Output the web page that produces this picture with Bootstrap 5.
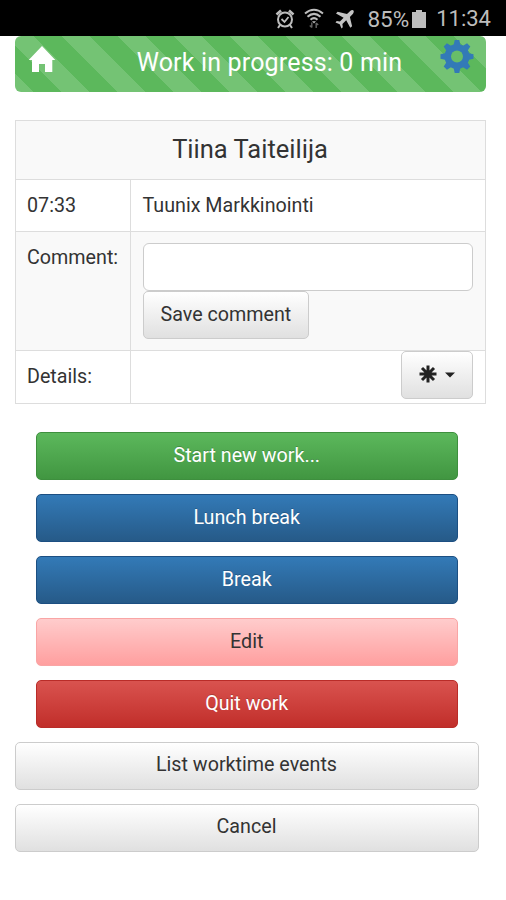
<!DOCTYPE html>
<html lang="en">
<head>
<meta charset="utf-8">
<meta name="viewport" content="width=device-width, initial-scale=1">
<title>Work in progress</title>
<link href="https://cdn.jsdelivr.net/npm/bootstrap@5.3.0/dist/css/bootstrap.min.css" rel="stylesheet">
<style>
body{font-family:Roboto,"Liberation Sans",sans-serif;font-size:19.700px;line-height:28px;color:#333;background:#fff;min-height:900px;overflow:hidden}
.statusbar{height:36px;background:#000;color:#bdbdbd;font-size:22px;line-height:36px;padding:2px 15px 0 0}
.statusbar svg{display:block;flex:none}
.plane{margin-left:10px}
.pct{font-size:22.500px;margin-left:12px}
.battery{margin:0 10px 0 3px}
.banner{height:56px;margin:0 20px 0 15px;border-radius:6px;background-color:#5cb85c;background-image:linear-gradient(45deg,rgba(255,255,255,.15) 25%,transparent 25%,transparent 50%,rgba(255,255,255,.15) 50%,rgba(255,255,255,.15) 75%,transparent 75%);background-size:56px 56px;background-position:-9px 0;color:#fff;padding:0 12px 0 13px}
.banner-title{font-size:25px;line-height:53px;letter-spacing:.17px;padding-left:43px}
.worktable{width:471px;margin:28px 0 0 14.5px;color:#333;table-layout:fixed;border-collapse:collapse}
.worktable td,.worktable th{border:1.5px solid #ddd;padding:11px 12px 0;vertical-align:top;background:#fff}
.worktable td{line-height:30px}
.worktable td:first-child{padding-left:11.500px;padding-right:8px}
.worktable .shade>*{background:#f9f9f9}
.worktable th{font-size:25.500px;font-weight:400;line-height:34px;text-align:center}
.field{height:48px;border:1.5px solid #ccc;border-radius:6px}
.act{height:48px;border-radius:5px;font-size:19.700px;line-height:28px;padding:8.500px 17px 9px;border-width:1.5px}
.more .act{padding-top:7.500px;padding-bottom:10px}
.act-plain{color:#333;background:linear-gradient(#fff,#e0e0e0);border-color:#ccc}
.act-green{color:#fff;background:linear-gradient(#5cb85c,#419641);border-color:#3e8f3e}
.act-blue{color:#fff;background:linear-gradient(#337ab7,#265a88);border-color:#1c4f82}
.act-pink{color:#333;background:linear-gradient(#ffcccc,#ff9f9f);border-color:#f9a5a5}
.act-red{color:#fff;background:linear-gradient(#d9534f,#c12e2a);border-color:#b92c28}
.actions{gap:14px;margin:28px 48px 14px 35.5px}
.more{gap:14px;margin:0 27.5px 0 14.5px}
.act-green,.act-blue,.act-red{text-shadow:0 -1px 0 rgba(0,0,0,.2)}
</style>
</head>
<body>
<header class="statusbar d-flex align-items-center justify-content-end">
  <svg width="20" height="22" viewBox="0 0 20 22" fill="none" stroke="#bdbdbd" stroke-width="2"><circle cx="10" cy="11.500" r="7"/><path d="M1.500 6.500 6 2.500M18.500 6.500 14 2.500" stroke-width="2.600"/><path d="M6.500 11l3 3 4-5" stroke-width="1.800"/><path d="M5 17l-2 3M15 17l2 3"/></svg>
  <svg class="ms-2" width="22" height="22" viewBox="0 0 22 22" fill="none" stroke="#bdbdbd" stroke-width="2"><path d="M2 5.500Q11-2 20 5.500M4.500 8.800Q11 3 17.500 8.800M7.500 11.800Q11 8.500 14.500 11.800"/><path d="M9 13.300h4L11 15.500z" fill="#bdbdbd" stroke="none"/><path d="M8.800 14.500v5M6.800 17.500l2 2M13.200 20v-5M15.200 17l-2-2" stroke="#666" stroke-width="1.400"/></svg>
  <svg class="plane" width="20" height="22" viewBox="0 0 20 22" fill="#c4c4c4"><path d="M18.300 2.200Q16.800 1.400 15.200 3L12 6.100 2.600 3.800 1 5.500l7.600 4.200-3.700 3.900-3.200-.5L.5 14.400l4.200 1.800 1.800 4.200 1.300-1.200-.4-3.300 3.800-3.600 4.100 7.500 1.800-1.600-2.200-9.300L18 5.700Q19.600 3.600 18.300 2.200z"/></svg>
  <span class="pct">85%</span>
  <svg class="battery" width="14" height="20" viewBox="0 0 14 20" fill="#bdbdbd"><path d="M0 3h4V1h6v2h4v16H0z"/></svg>
  <span>11:34</span>
</header>

<div class="banner d-flex">
  <svg class="flex-shrink-0" width="28" height="46" viewBox="0 0 28 46" fill="#fff"><path d="M14 10 27.300 24H24.300V36H17V28H11V36H4V24H.7z"/></svg>
  <div class="banner-title flex-grow-1 text-center">Work in progress: 0 min</div>
  <svg class="flex-shrink-0" width="34" height="42" viewBox="-17 -20.500 34 42"><g fill="#337ab7"><circle r="12.500"/><path id="tooth" d="M-3.500-11-2.300-16.500H2.300L3.500-11V11L2.300 16.500H-2.300L-3.500 11z"/><use href="#tooth" transform="rotate(45)"/><use href="#tooth" transform="rotate(90)"/><use href="#tooth" transform="rotate(135)"/></g><circle r="6" fill="#68be68"/></svg>
</div>

<table class="worktable">
  <colgroup><col style="width:115px"><col></colgroup>
  <tr class="shade" style="height:59px"><th colspan="2">Tiina Taiteilija</th></tr>
  <tr style="height:52px"><td>07:33</td><td>Tuunix Markkinointi</td></tr>
  <tr class="shade" style="height:119px"><td>Comment:</td><td><input class="field d-block w-100 bg-white" type="text" aria-label="Comment"><button class="btn act act-plain d-block">Save comment</button></td></tr>
  <tr style="height:53px"><td>Details:</td><td class="pt-0"><button class="btn act act-plain d-flex align-items-center ms-auto" aria-label="Details menu"><svg width="18" height="20" viewBox="-9 -9 18 20" stroke="#222" stroke-width="3"><path d="M0-8.500V8.500M-8.500 0H8.500M-6-6 6 6M-6 6 6-6"/></svg><svg class="ms-2" width="10" height="6" viewBox="0 0 10 6" fill="#222"><path d="M0 .5H10L5 5.500z"/></svg></button></td></tr>
</table>

<div class="actions d-grid">
  <button class="btn act act-green">Start new work...</button>
  <button class="btn act act-blue">Lunch break</button>
  <button class="btn act act-blue">Break</button>
  <button class="btn act act-pink">Edit</button>
  <button class="btn act act-red">Quit work</button>
</div>
<div class="more d-grid">
  <button class="btn act act-plain">List worktime events</button>
  <button class="btn act act-plain">Cancel</button>
</div>
<script src="https://cdn.jsdelivr.net/npm/bootstrap@5.3.0/dist/js/bootstrap.bundle.min.js"></script>
</body>
</html>
